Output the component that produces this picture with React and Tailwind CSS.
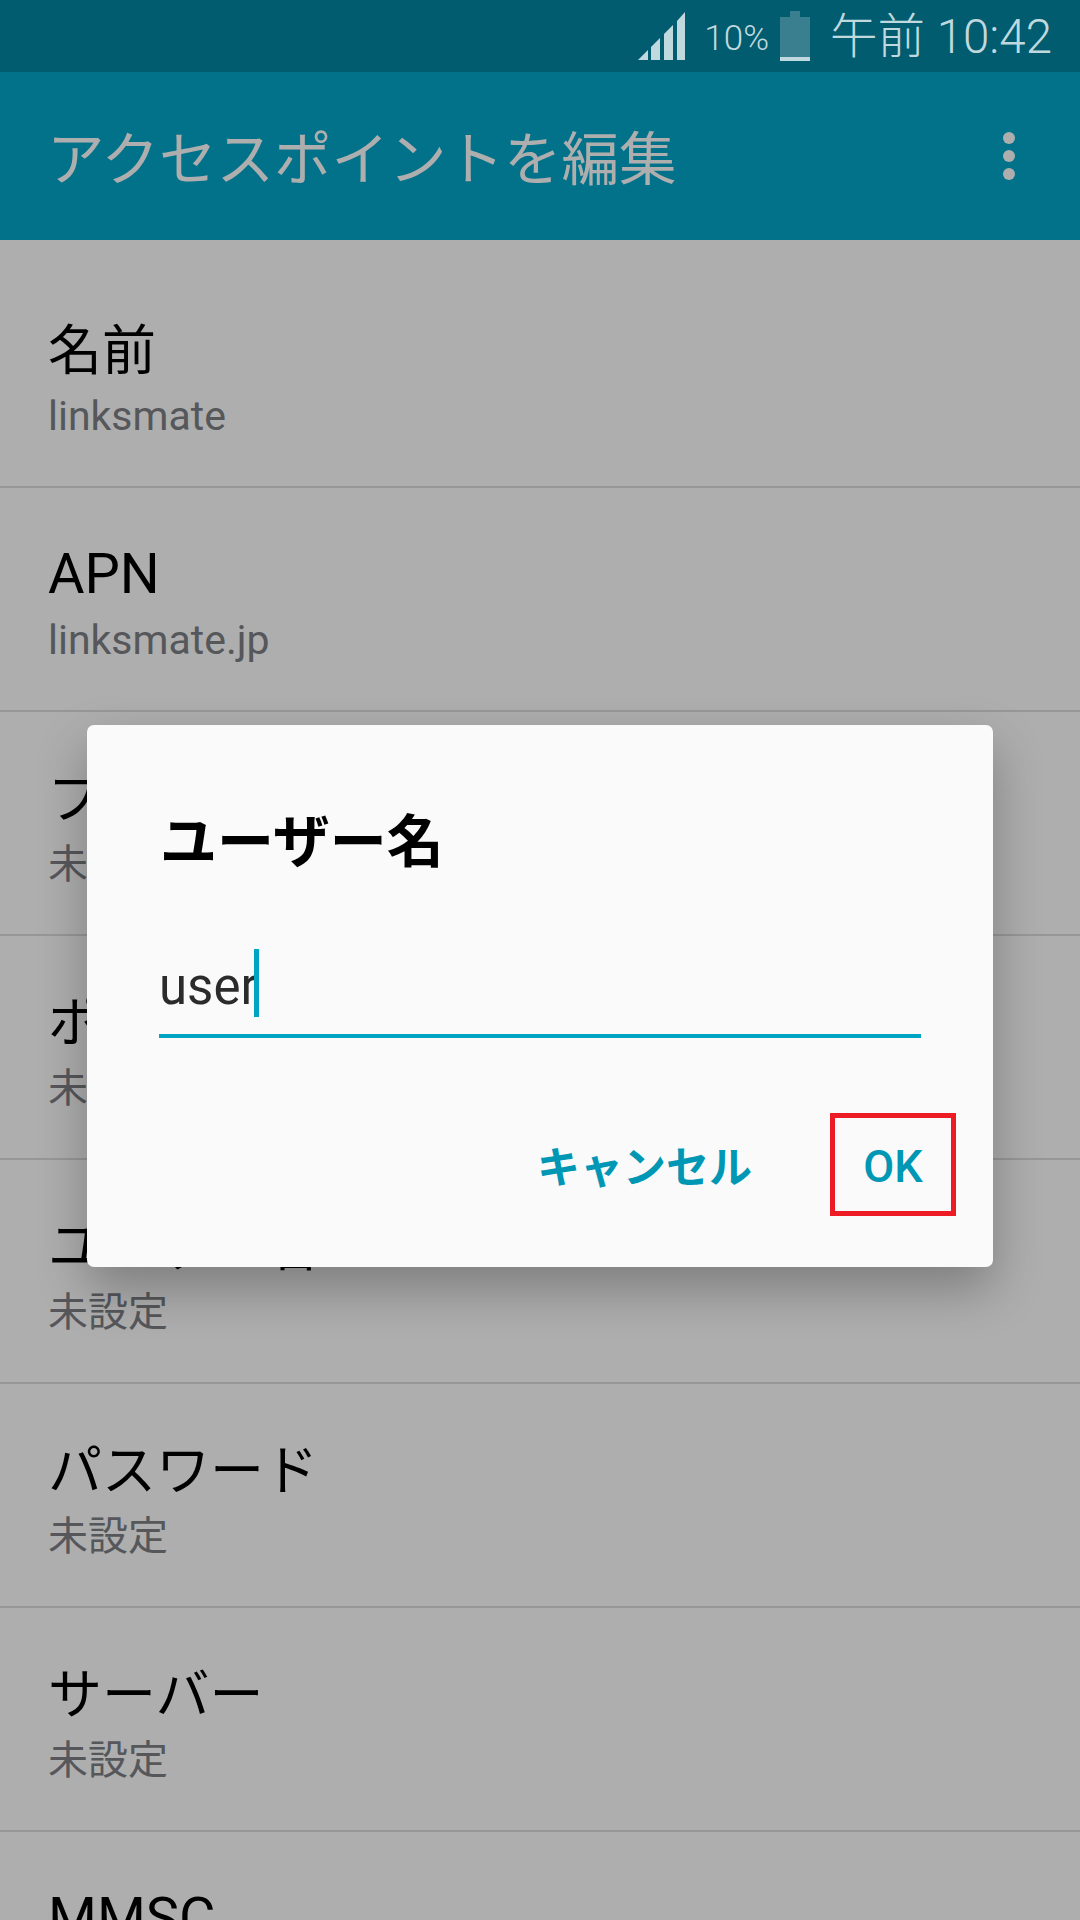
import React from 'react';

const rows = [
    { title: '名前', value: 'linksmate', first: true, latinValue: true },
    { title: 'APN', value: 'linksmate.jp', latinTitle: true, latinValue: true },
    { title: 'プロキシ', value: '未設定' },
    { title: 'ポート', value: '未設定' },
    { title: 'ユーザー名', value: '未設定' },
    { title: 'パスワード', value: '未設定' },
    { title: 'サーバー', value: '未設定' },
    { title: 'MMSC', value: '未設定', latinTitle: true },
];

const SignalIcon = () => (
    <svg width="48" height="48" viewBox="0 0 48 48" className="block">
        <g fill="#c0d9de">
            <polygon points="0,48 10,38 10,48" />
            <polygon points="13,35 22,26 22,48 13,48" />
            <polygon points="26,22 35,13 35,48 26,48" />
            <polygon points="39,9 47,0 47,48 39,48" />
        </g>
    </svg>
);

const BatteryIcon = () => (
    <svg width="30" height="50" viewBox="0 0 30 50" className="block">
        <path d="M10 0h10v6h10v40H0V6h10z" fill="#3a7f8f" />
        <rect x="0" y="46" width="30" height="4" fill="#c0d9de" />
    </svg>
);

const Row = ({ title, value, first, latinTitle, latinValue }) => (
    <div className={`border-b-2 border-[#979797] px-[48px] ${first ? 'h-[248px] pt-[72px]' : 'h-[224px] pt-[48px]'}`}>
        <div className={`leading-[76px] text-black ${latinTitle ? 'text-[56px]' : 'mt-[2px] text-[54px]'}`}>{title}</div>
        <div className={`leading-[50px] text-[#55575a] ${latinValue ? 'text-[41px]' : 'text-[40px]'} ${first ? 'mt-[1px]' : latinTitle && latinValue ? 'mt-[3px]' : 'mt-[2px]'}`}>{value}</div>
    </div>
);

export default function App() {
    return (
        <div className="relative h-[1920px] w-[1080px] overflow-hidden bg-[#aeaeae] font-['Roboto','Noto_Sans_CJK_JP',sans-serif]">
            <div className="flex h-[72px] items-center justify-end bg-[#015c70] pr-[28px] text-[#c0d9de]">
                <SignalIcon />
                <span className="ml-[18px] pt-[4px] text-[35px] font-light leading-none">10%</span>
                <span className="ml-[11px]"><BatteryIcon /></span>
                <span className="ml-[20px] pt-[4px] text-[47.5px] font-light leading-none">午前 10:42</span>
            </div>
            <div className="flex h-[168px] items-center justify-between bg-[#01728a] pl-[47px] pr-[65px]">
                <h1 className="pt-[10px] text-[57.5px] font-normal leading-none text-[#aeaeae]">アクセスポイントを編集</h1>
                <div className="flex flex-col gap-[6px]">
                    <span className="h-[12px] w-[12px] rounded-full bg-[#aeaeae]" />
                    <span className="h-[12px] w-[12px] rounded-full bg-[#aeaeae]" />
                    <span className="h-[12px] w-[12px] rounded-full bg-[#aeaeae]" />
                </div>
            </div>

            {rows.map((row) => (
                <Row key={row.title} {...row} />
            ))}

            <div className="absolute left-[87px] top-[725px] h-[542px] w-[906px] rounded-[7px] bg-[#fafafa] shadow-[0_22px_50px_rgba(0,0,0,0.28)]">
                <h2 className="pl-[73px] pt-[76px] text-[57px] font-bold leading-[84px] text-black">ユーザー名</h2>
                <div className="mx-[72px] mt-[63px] flex h-[90px] items-end border-b-[4px] border-[#00a5c6] pb-[17px]">
                    <span className="text-[51px] leading-[60px] text-[#2b2b2b]">user</span>
                    <span className="ml-[-4px] h-[68px] w-[5px] bg-[#00a5c6]" />
                </div>
                <div className="mr-[37px] mt-[75px] flex items-center justify-end">
                    <button className="mt-[8px] text-[43px] font-bold leading-none text-[#0097b5]">キャンセル</button>
                    <button className="ml-[78px] flex h-[103px] w-[126px] items-center justify-center border-[5px] border-[#ed1c24] pt-[4px] text-[45px] font-medium leading-none text-[#0097b5]">OK</button>
                </div>
            </div>
        </div>
    );
}
